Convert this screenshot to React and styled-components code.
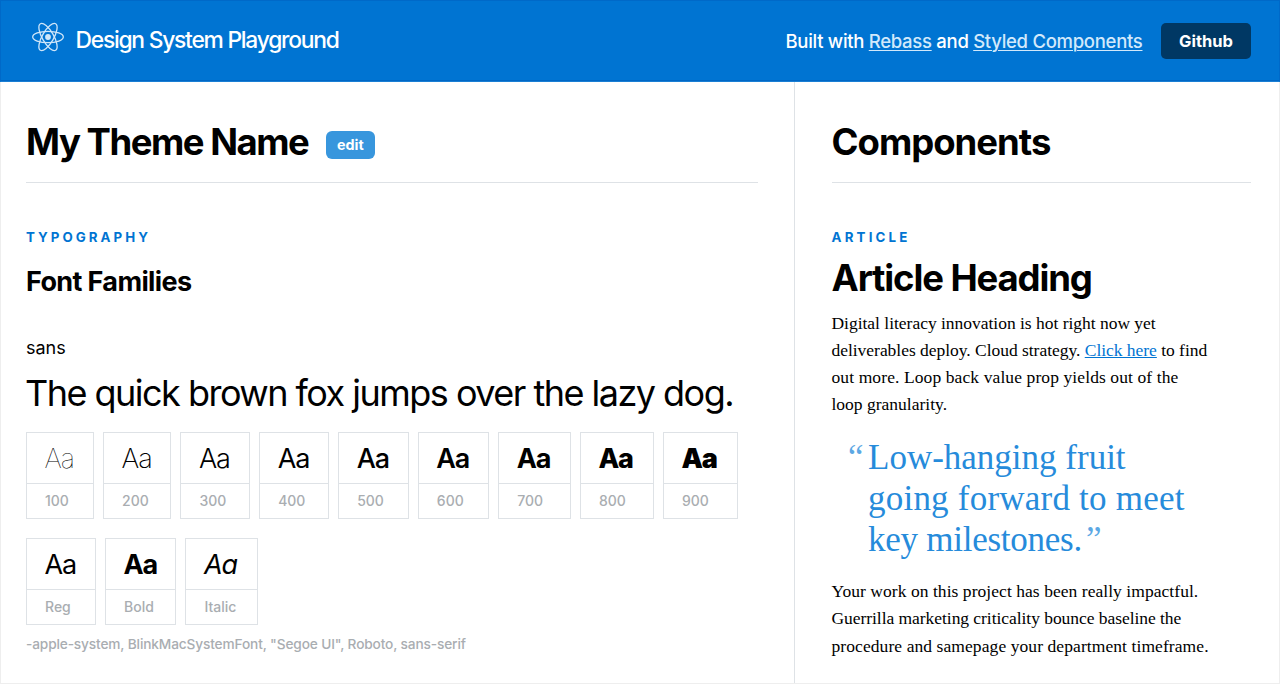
import React from 'react';
import styled, { createGlobalStyle } from 'styled-components';

const sans = 'Inter, "Liberation Sans", sans-serif';
const serif = '"Liberation Serif", serif';
const line = '#dee2e6';

const GlobalStyle = createGlobalStyle`
  * { box-sizing: border-box; }
  body {
    margin: 0;
    background: #fff;
    color: #000;
    font-family: ${sans};
    overflow: hidden;
  }
  h1, h2, h3, p, blockquote { margin: 0; }
`;

const Page = styled.div`
  height: 684px;
  display: flex;
  flex-direction: column;
`;

const Header = styled.header`
  flex: none;
  height: 82px;
  display: flex;
  align-items: center;
  justify-content: space-between;
  padding: 0 28px 0 32px;
  background: #0074d2;
  color: #fff;
  border: 1px solid #0069c8;
  border-bottom-color: #1a7fd4;
  box-shadow: inset 0 -1px 0 #0067c5;
`;

const Brand = styled.div`
  display: flex;
  align-items: center;
  gap: 11px;
`;

const Logo = styled.svg`
  width: 32px;
  height: 32px;
  margin-top: -8px;
  margin-left: -1px;
`;

const BrandName = styled.span`
  font-size: 22.8px;
  font-weight: 450;
  line-height: 30px;
  letter-spacing: -1.23px;
  white-space: nowrap;
  margin-top: -2px;
  padding-left: 0.5px;
`;

const Credits = styled.div`
  display: flex;
  align-items: center;
  gap: 18.5px;
  font-size: 18.5px;
  font-weight: 450;
  letter-spacing: -0.29px;
  white-space: nowrap;
`;

const HeaderLink = styled.a`
  color: #d2e9fb;
  text-decoration: underline;
  text-decoration-thickness: 1px;
  text-underline-offset: 2px;
`;

const GithubButton = styled.button`
  width: 90px;
  height: 36px;
  padding: 0;
  border: 0;
  border-radius: 5px;
  background: #003864;
  color: #fff;
  font: 700 16.5px/36px ${sans};
  letter-spacing: 0;
`;

const Columns = styled.main`
  flex: 1;
  display: grid;
  grid-template-columns: 793px 1fr;
  border: solid #eee;
  border-width: 0 1px 1px;
`;

const Panel = styled.section`
  padding: 40px ${(p) => p.$right}px 0 ${(p) => p.$left}px;
  border-left: ${(p) => (p.$divided ? `1px solid ${line}` : '0')};
  min-width: 0;
`;

const PanelHead = styled.div`
  display: flex;
  align-items: center;
  gap: 18px;
  height: 61px;
  padding-bottom: 20px;
  border-bottom: 1px solid ${line};
`;

const Title = styled.h1`
  font-size: 36.5px;
  line-height: 40px;
  font-weight: 700;
  letter-spacing: ${(p) => p.$track}px;
  white-space: nowrap;
`;

const EditButton = styled.button`
  width: 49px;
  height: 28px;
  margin-top: 5px;
  padding: 0 1px 0 0;
  border: 0;
  border-radius: 6px;
  background: #3896dd;
  color: #fff;
  font: 700 14.3px/28px ${sans};
`;

const Eyebrow = styled.h3`
  margin-top: 45px;
  font-size: 13.3px;
  line-height: 18px;
  font-weight: 700;
  letter-spacing: ${(p) => p.$track}px;
  text-transform: uppercase;
  color: #0074d2;
`;

const Subhead = styled.h2`
  margin-top: 19px;
  font-size: 27px;
  line-height: 34px;
  letter-spacing: -0.63px;
`;

const FamilyName = styled.p`
  margin-top: 38px;
  font-size: 18px;
  line-height: 22px;
`;

const Pangram = styled.p`
  margin: 12px 0 0 -1px;
  font-size: 36px;
  line-height: 44px;
  letter-spacing: -1.52px;
  white-space: nowrap;
`;

const Samples = styled.div`
  display: flex;
  gap: 9.05px;
  margin-top: ${(p) => p.$top}px;
`;

const Sample = styled.div`
  flex: none;
  width: ${(p) => p.$width}px;
  height: 87px;
  border: 1px solid ${line};
`;

const Glyphs = styled.div`
  height: 51px;
  padding-left: 17.5px;
  border-bottom: 1px solid ${line};
  font-size: 27px;
  line-height: 51px;
  letter-spacing: -1.1px;
  font-weight: ${(p) => p.$weight};
  font-style: ${(p) => (p.$italic ? 'italic' : 'normal')};
`;

const Caption = styled.div`
  padding-left: 18px;
  font-size: 14px;
  line-height: 34px;
  font-weight: 500;
  color: #a9adb1;
`;

const Stack = styled.p`
  margin-top: 10px;
  font-size: 13.7px;
  line-height: 18px;
  font-weight: 500;
  color: #a9adb1;
  letter-spacing: -0.14px;
  white-space: nowrap;
`;

const ArticleTitle = styled(Title)`
  margin-top: 12px;
  line-height: 40px;
`;

const Paragraph = styled.p`
  margin-top: ${(p) => p.$top}px;
  font: 17.5px/27.3px ${serif};
`;

const Line = styled.span`
  display: block;
  white-space: nowrap;
  letter-spacing: ${(p) => p.$track || 0}px;
`;

const TextLink = styled.a`
  color: #0074d2;
  text-decoration: underline;
`;

const Quote = styled.blockquote`
  margin-top: 18.4px;
  padding-left: 36.5px;
  font: 35px/41px ${serif};
  color: #268bdb;
`;

const Mark = styled.span`
  display: inline-block;
  width: 20px;
  margin-left: ${(p) => p.$shift}px;
  letter-spacing: 0;
  opacity: 0.75;
`;

const weights = [
  [100, 68], [200, 68.4], [300, 69.6], [400, 70], [500, 70.6],
  [600, 71.4], [700, 72.6], [800, 74], [900, 75],
];

const styles = [
  { name: 'Reg', weight: 400, width: 70 },
  { name: 'Bold', weight: 700, width: 71.4 },
  { name: 'Italic', weight: 400, width: 72.6, italic: true },
];

function ReactLogo() {
  return (
    <Logo viewBox="-16 -16 32 32" fill="none" stroke="#cfe6f9" strokeWidth="1.3">
      <ellipse rx="15.3" ry="5.7" />
      <ellipse rx="15.3" ry="5.7" transform="rotate(60)" />
      <ellipse rx="15.3" ry="5.7" transform="rotate(120)" />
      <circle r="2.9" fill="#cfe6f9" stroke="none" />
    </Logo>
  );
}

export default function App() {
  return (
    <Page>
      <GlobalStyle />
      <Header>
        <Brand>
          <ReactLogo />
          <BrandName>Design System Playground</BrandName>
        </Brand>
        <Credits>
          <span>
            Built with <HeaderLink>Rebass</HeaderLink> and <HeaderLink>Styled Components</HeaderLink>
          </span>
          <GithubButton>Github</GithubButton>
        </Credits>
      </Header>
      <Columns>
        <Panel $left={25} $right={36}>
          <PanelHead>
            <Title $track={-1.48}>My Theme Name</Title>
            <EditButton>edit</EditButton>
          </PanelHead>
          <Eyebrow $track={3.05}>Typography</Eyebrow>
          <Subhead>Font Families</Subhead>
          <FamilyName>sans</FamilyName>
          <Pangram>The quick brown fox jumps over the lazy dog.</Pangram>
          <Samples $top={17}>
            {weights.map(([weight, width]) => (
              <Sample key={weight} $width={width}>
                <Glyphs $weight={weight}>Aa</Glyphs>
                <Caption>{weight}</Caption>
              </Sample>
            ))}
          </Samples>
          <Samples $top={19}>
            {styles.map((s) => (
              <Sample key={s.name} $width={s.width}>
                <Glyphs $weight={s.weight} $italic={s.italic}>Aa</Glyphs>
                <Caption>{s.name}</Caption>
              </Sample>
            ))}
          </Samples>
          <Stack>-apple-system, BlinkMacSystemFont, "Segoe UI", Roboto, sans-serif</Stack>
        </Panel>
        <Panel $left={36.5} $right={28} $divided>
          <PanelHead>
            <Title $track={-1}>Components</Title>
          </PanelHead>
          <Eyebrow $track={3.2}>Article</Eyebrow>
          <ArticleTitle as="h2" $track={-1.12}>Article Heading</ArticleTitle>
          <Paragraph $top={11.6}>
            <Line $track={-0.02}>Digital literacy innovation is hot right now yet</Line>
            <Line $track={-0.03}>deliverables deploy. Cloud strategy. <TextLink>Click here</TextLink> to find</Line>
            <Line $track={0.1}>out more. Loop back value prop yields out of the</Line>
            <Line>loop granularity.</Line>
          </Paragraph>
          <Quote>
            <Line><Mark $shift={-20}>“</Mark>Low-hanging fruit</Line>
            <Line $track={0.22}>going forward to meet</Line>
            <Line $track={-0.25}>key milestones.<Mark $shift={4}>”</Mark></Line>
          </Quote>
          <Paragraph $top={18}>
            <Line $track={0.05}>Your work on this project has been really impactful.</Line>
            <Line $track={-0.05}>Guerrilla marketing criticality bounce baseline the</Line>
            <Line $track={0.08}>procedure and samepage your department timeframe.</Line>
          </Paragraph>
        </Panel>
      </Columns>
    </Page>
  );
}
